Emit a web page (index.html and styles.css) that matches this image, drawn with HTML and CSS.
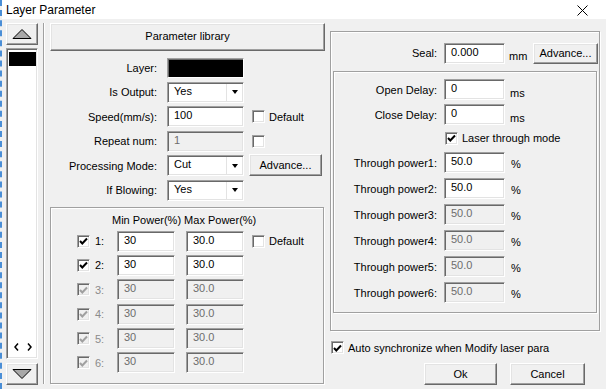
FILE: index.html
```html
<!DOCTYPE html>
<html lang="en">
<head>
    <meta charset="UTF-8">
    <title>Layer Parameter</title>
    <link rel="stylesheet" href="styles.css">
</head>
<body>
<div class="window">
    <div class="titlebar">
        <span class="title">Layer Parameter</span>
        <svg class="close" width="11" height="11" viewBox="0 0 11 11"><path d="M0.5 0.5 L10.5 10.5 M10.5 0.5 L0.5 10.5" stroke="#000" stroke-width="1"/></svg>
    </div>
    <div class="main">
        <!-- layer list -->
        <div class="layers">
            <div class="btn arrow-btn">
                <svg width="20" height="10" viewBox="0 0 20 10"><polygon points="10,0.5 19,9.5 1,9.5" fill="#a8a8a8" stroke="#000" stroke-width="1"/></svg>
            </div>
            <div class="list">
                <div class="layer-item"></div>
                <div class="list-scroll">
                    <svg width="20" height="8" viewBox="0 0 20 8"><path d="M4 0.5 L1 4 L4 7.5 M14 0.5 L17 4 L14 7.5" stroke="#000" stroke-width="1.5" fill="none"/></svg>
                </div>
            </div>
            <div class="btn arrow-btn">
                <svg width="20" height="10" viewBox="0 0 20 10"><polygon points="1,0.5 19,0.5 10,9.5" fill="#a8a8a8" stroke="#000" stroke-width="1"/></svg>
            </div>
        </div>
        <div class="vsep"></div>

        <!-- middle column -->
        <div class="middle">
            <div class="btn lib-btn">Parameter library</div>
            <div class="form">
                <div class="row">
                    <span class="label">Layer:</span>
                    <span class="field swatch"></span>
                </div>
                <div class="row">
                    <span class="label">Is Output:</span>
                    <span class="field select">Yes<span class="drop"><i></i></span></span>
                </div>
                <div class="row">
                    <span class="label">Speed(mm/s):</span>
                    <span class="field">100</span>
                    <span class="check extra"></span><span class="check-text">Default</span>
                </div>
                <div class="row">
                    <span class="label">Repeat num:</span>
                    <span class="field off">1</span>
                    <span class="check extra"></span>
                </div>
                <div class="row">
                    <span class="label">Processing Mode:</span>
                    <span class="field select">Cut<span class="drop"><i></i></span></span>
                    <span class="btn adv-btn">Advance...</span>
                </div>
                <div class="row">
                    <span class="label">If Blowing:</span>
                    <span class="field select">Yes<span class="drop"><i></i></span></span>
                </div>
            </div>

            <div class="group power-box">
                <div class="power-head">Min Power(%) Max Power(%)</div>
                <div class="power-rows">
                    <div class="prow">
                        <span class="check on"><svg width="11" height="11" viewBox="0 0 11 11"><path d="M2 5 L4.3 7.5 L9 2.5" stroke="#000" stroke-width="2" fill="none"/></svg></span>
                        <span class="num">1:</span>
                        <span class="field pf">30</span>
                        <span class="field pf">30.0</span>
                        <span class="check extra"></span><span class="check-text">Default</span>
                    </div>
                    <div class="prow">
                        <span class="check on"><svg width="11" height="11" viewBox="0 0 11 11"><path d="M2 5 L4.3 7.5 L9 2.5" stroke="#000" stroke-width="2" fill="none"/></svg></span>
                        <span class="num">2:</span>
                        <span class="field pf">30</span>
                        <span class="field pf">30.0</span>
                    </div>
                    <div class="prow dim">
                        <span class="check on"><svg width="11" height="11" viewBox="0 0 11 11"><path d="M2 5 L4.3 7.5 L9 2.5" stroke="#a0a0a0" stroke-width="2" fill="none"/></svg></span>
                        <span class="num">3:</span>
                        <span class="field pf off">30</span>
                        <span class="field pf off">30.0</span>
                    </div>
                    <div class="prow dim">
                        <span class="check on"><svg width="11" height="11" viewBox="0 0 11 11"><path d="M2 5 L4.3 7.5 L9 2.5" stroke="#a0a0a0" stroke-width="2" fill="none"/></svg></span>
                        <span class="num">4:</span>
                        <span class="field pf off">30</span>
                        <span class="field pf off">30.0</span>
                    </div>
                    <div class="prow dim">
                        <span class="check on"><svg width="11" height="11" viewBox="0 0 11 11"><path d="M2 5 L4.3 7.5 L9 2.5" stroke="#a0a0a0" stroke-width="2" fill="none"/></svg></span>
                        <span class="num">5:</span>
                        <span class="field pf off">30</span>
                        <span class="field pf off">30.0</span>
                    </div>
                    <div class="prow dim">
                        <span class="check on"><svg width="11" height="11" viewBox="0 0 11 11"><path d="M2 5 L4.3 7.5 L9 2.5" stroke="#a0a0a0" stroke-width="2" fill="none"/></svg></span>
                        <span class="num">6:</span>
                        <span class="field pf off">30</span>
                        <span class="field pf off">30.0</span>
                    </div>
                </div>
            </div>
        </div>

        <!-- right column -->
        <div class="right">
            <div class="group outer">
                <div class="seal-row">
                    <span class="rlabel seal-label">Seal:</span>
                    <span class="field rf">0.000</span>
                    <span class="unit">mm</span>
                    <span class="btn seal-btn">Advance...</span>
                </div>
                <div class="group inner">
                    <div class="rrow">
                        <span class="rlabel">Open Delay:</span>
                        <span class="field rf">0</span>
                        <span class="unit">ms</span>
                    </div>
                    <div class="rrow">
                        <span class="rlabel">Close Delay:</span>
                        <span class="field rf">0</span>
                        <span class="unit">ms</span>
                    </div>
                    <div class="laser-row">
                        <span class="check on"><svg width="11" height="11" viewBox="0 0 11 11"><path d="M2 5 L4.3 7.5 L9 2.5" stroke="#000" stroke-width="2" fill="none"/></svg></span>
                        <span class="check-text">Laser through mode</span>
                    </div>
                    <div class="through">
                        <div class="rrow">
                            <span class="rlabel">Through power1:</span>
                            <span class="field rf">50.0</span>
                            <span class="unit pct">%</span>
                        </div>
                        <div class="rrow">
                            <span class="rlabel">Through power2:</span>
                            <span class="field rf">50.0</span>
                            <span class="unit pct">%</span>
                        </div>
                        <div class="rrow">
                            <span class="rlabel">Through power3:</span>
                            <span class="field rf off">50.0</span>
                            <span class="unit pct">%</span>
                        </div>
                        <div class="rrow">
                            <span class="rlabel">Through power4:</span>
                            <span class="field rf off">50.0</span>
                            <span class="unit pct">%</span>
                        </div>
                        <div class="rrow">
                            <span class="rlabel">Through power5:</span>
                            <span class="field rf off">50.0</span>
                            <span class="unit pct">%</span>
                        </div>
                        <div class="rrow">
                            <span class="rlabel">Through power6:</span>
                            <span class="field rf off">50.0</span>
                            <span class="unit pct">%</span>
                        </div>
                    </div>
                </div>
            </div>
            <div class="sync-row">
                <span class="check on"><svg width="11" height="11" viewBox="0 0 11 11"><path d="M2 5 L4.3 7.5 L9 2.5" stroke="#000" stroke-width="2" fill="none"/></svg></span>
                <span class="check-text">Auto synchronize when Modify laser para</span>
            </div>
            <div class="actions">
                <span class="btn ok-btn">Ok</span>
                <span class="btn cancel-btn">Cancel</span>
            </div>
        </div>
    </div>
</div>
</body>
</html>
```

FILE: styles.css
```css
*{
    margin: 0;
    padding: 0;
    box-sizing: border-box;
}
body{
    background: #f0f0f0;
    font-family: "Liberation Sans", Arial, sans-serif;
    font-size: 11px;
    color: #000;
    width: 606px;
    height: 389px;
    overflow: hidden;
}
.window{
    height: 389px;
    border-left: 2px dashed #4a8ed6;
}
.titlebar{
    height: 19px;
    background: #fff;
    display: flex;
    align-items: center;
    padding-left: 4px;
}
.title{
    font-size: 12px;
    flex: 1;
}
.close{
    margin-right: 18px;
    margin-top: 2px;
}
.main{
    display: flex;
    padding: 4px 0 0 4px;
}

/* raised button */
.btn{
    background: #f0f0f0;
    border: 1px solid;
    border-color: #fff #696969 #696969 #fff;
    box-shadow: inset -1px -1px 0 #a0a0a0, inset 1px 1px 0 #e3e3e3;
    display: flex;
    align-items: center;
    justify-content: center;
}

/* sunken field */
.field{
    height: 21px;
    background: #fff;
    border: 1px solid;
    border-color: #a0a0a0 #fff #fff #a0a0a0;
    box-shadow: inset 1px 1px 0 #696969, inset -1px -1px 0 #e3e3e3;
    padding: 2px 0 0 6px;
    display: block;
    position: relative;
}
.field.off{
    background: #f0f0f0;
    color: #6d6d6d;
}

.check{
    width: 13px;
    height: 13px;
    background: #fff;
    border: 1px solid;
    border-color: #a0a0a0 #fff #fff #a0a0a0;
    box-shadow: inset 1px 1px 0 #696969, inset -1px -1px 0 #e3e3e3;
    display: inline-flex;
    align-items: center;
    justify-content: center;
    flex: none;
}
.check svg{
    margin: 1px 0 0 0;
}
.check-text{
    margin-left: 4px;
}

.group{
    border: 1px solid #a0a0a0;
    box-shadow: 1px 1px 0 #fff, inset 1px 1px 0 #fff;
}

/* left list */
.layers{
    width: 32px;
    display: flex;
    flex-direction: column;
}
.arrow-btn{
    height: 22px;
}
.list{
    height: 311px;
    margin: 3px 0 4px;
    background: #fff;
    border: 1px solid;
    border-color: #a0a0a0 #fff #fff #a0a0a0;
    box-shadow: inset 1px 1px 0 #696969, inset -1px -1px 0 #e3e3e3;
    padding: 3px 1px 0 2px;
    display: flex;
    flex-direction: column;
}
.layer-item{
    height: 14px;
    background: #000;
}
.list-scroll{
    margin-top: auto;
    height: 17px;
    padding-left: 5px;
}
.vsep{
    width: 2px;
    height: 361px;
    margin: 0 5px;
    border-left: 1px solid #a0a0a0;
    border-right: 1px solid #fff;
}

/* middle column */
.middle{
    width: 275px;
}
.lib-btn{
    height: 28px;
    padding-bottom: 2px;
}
.form{
    margin-top: 6px;
    display: flex;
    flex-direction: column;
    gap: 3.5px;
}
.row{
    height: 21px;
    display: flex;
    align-items: center;
}
.label{
    width: 107px;
    text-align: right;
    margin-right: 10px;
}
.row .field{
    width: 77px;
}
.swatch{
    height: 20px;
    background: #000;
    box-shadow: inset 1px 1px 0 #696969;
}
.select .drop{
    position: absolute;
    right: 1px;
    top: 1px;
    width: 16px;
    height: 17px;
    border-left: 1px solid #e3e3e3;
    display: flex;
    align-items: center;
    justify-content: center;
}
.select .drop i{
    border-left: 3.5px solid transparent;
    border-right: 3.5px solid transparent;
    border-top: 4px solid #000;
}
.extra{
    margin-left: 8px;
}
.adv-btn{
    width: 73px;
    height: 22px;
    margin: -2px 0 0 5px;
}
.power-box{
    width: 274px;
    height: 177px;
    margin-top: 6px;
}
.power-head{
    padding: 6px 0 0 61px;
    height: 23px;
}
.power-rows{
    display: flex;
    flex-direction: column;
    gap: 3.4px;
}
.prow{
    height: 21px;
    display: flex;
    align-items: center;
    padding-left: 26px;
}
.prow .num{
    width: 22px;
    margin-left: 5px;
}
.prow.dim .num{
    color: #8b8b8b;
}
.prow.dim .check{
    background: #f0f0f0;
}
.pf{
    width: 58px;
    margin-right: 11px;
}
.prow .extra{
    margin-left: -3px;
}

/* right column */
.right{
    width: 270px;
    margin-left: 5px;
}
.outer{
    margin-top: 8px;
    height: 300px;
    padding: 11px 1px 0 2px;
}
.seal-row{
    height: 20px;
    display: flex;
    align-items: center;
}
.rlabel{
    width: 104px;
    text-align: right;
    margin-right: 7px;
}
.rf{
    width: 61px;
}
.unit{
    margin-left: 5px;
    margin-top: 6px;
}
.unit.pct{
    margin-top: 2px;
    margin-left: 6px;
}
.seal-label{
    margin-right: 7px;
}
.seal-row .unit{
    margin-left: 4px;
}
.seal-btn{
    width: 65px;
    height: 21px;
    margin-left: auto;
}
.inner{
    margin-top: 8px;
    width: 264px;
    height: 242px;
    padding: 7px 0 0 0;
}
.inner .rlabel{
    width: 103px;
}
.rrow{
    height: 21px;
    display: flex;
    align-items: center;
    margin-bottom: 4px;
}
.laser-row{
    height: 20px;
    margin: -1px 0 4px 111px;
    display: flex;
    align-items: center;
}
.through .rrow{
    margin-bottom: 5px;
}
.sync-row{
    margin-top: 10px;
    display: flex;
    align-items: center;
    height: 13px;
    padding-left: 1px;
}
.actions{
    margin-top: 9px;
    display: flex;
    padding-left: 94px;
    gap: 13px;
}
.ok-btn{
    width: 73px;
    height: 22px;
}
.cancel-btn{
    width: 75px;
    height: 22px;
}
```
